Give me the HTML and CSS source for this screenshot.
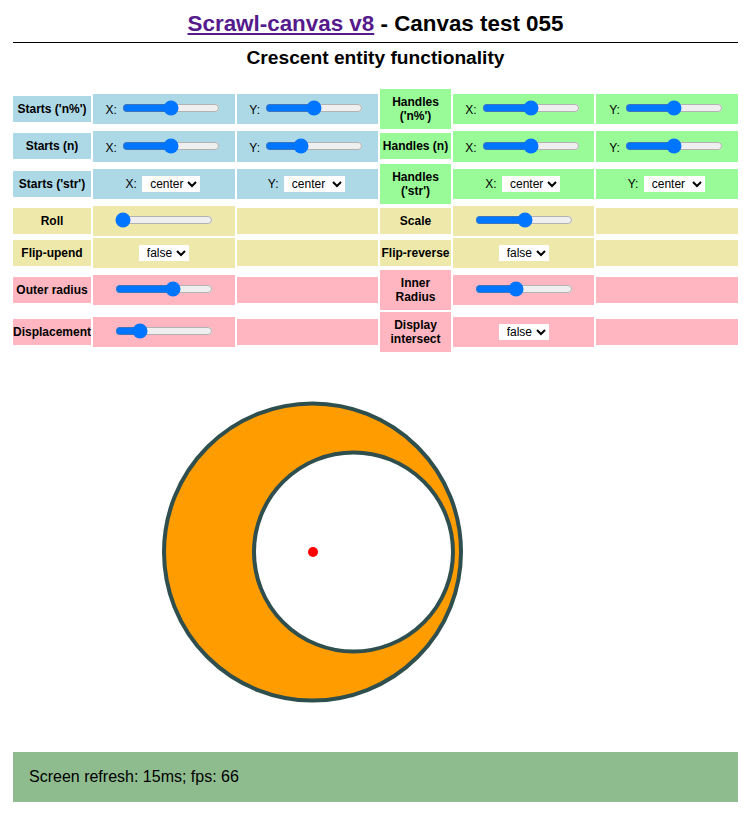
FILE: index.html
```html
<!DOCTYPE html>
<html lang="en">
<head>
<meta charset="utf-8">
<title>Demo Canvas 055</title>
<link rel="stylesheet" href="styles.css">
</head>
<body>
<h1 class="title"><a class="home" href="#">Scrawl-canvas v8</a> - Canvas test 055</h1>
<h2 class="subtitle">Crescent entity functionality</h2>

<div class="controls">
  <div class="cell label blue">Starts ('n%')</div>
  <div class="cell rng blue">X: <input class="slider" type="range" min="0" max="100" value="50"></div>
  <div class="cell rng blue">Y: <input class="slider" type="range" min="0" max="100" value="50"></div>
  <div class="cell label green">Handles ('n%')</div>
  <div class="cell rng green">X: <input class="slider" type="range" min="0" max="100" value="50"></div>
  <div class="cell rng green">Y: <input class="slider" type="range" min="0" max="100" value="50"></div>

  <div class="cell label blue">Starts (n)</div>
  <div class="cell rng blue">X: <input class="slider" type="range" min="0" max="600" value="300"></div>
  <div class="cell rng blue">Y: <input class="slider" type="range" min="0" max="600" value="200"></div>
  <div class="cell label green">Handles (n)</div>
  <div class="cell rng green">X: <input class="slider" type="range" min="-200" max="200" value="0"></div>
  <div class="cell rng green">Y: <input class="slider" type="range" min="-200" max="200" value="0"></div>

  <div class="cell label blue">Starts ('str')</div>
  <div class="cell sel blue">X: <select class="choice"><option>left</option><option selected>center</option><option>right</option></select></div>
  <div class="cell sel blue">Y: <select class="choice"><option>top</option><option selected>center</option><option>bottom</option></select></div>
  <div class="cell label green">Handles ('str')</div>
  <div class="cell sel green">X: <select class="choice"><option>left</option><option selected>center</option><option>right</option></select></div>
  <div class="cell sel green">Y: <select class="choice"><option>top</option><option selected>center</option><option>bottom</option></select></div>

  <div class="cell label yellow">Roll</div>
  <div class="cell rng yellow"><input class="slider" type="range" min="0" max="360" value="0"></div>
  <div class="cell yellow">&nbsp;</div>
  <div class="cell label yellow">Scale</div>
  <div class="cell rng yellow"><input class="slider" type="range" min="0" max="100" value="52"></div>
  <div class="cell yellow">&nbsp;</div>

  <div class="cell label yellow">Flip-upend</div>
  <div class="cell sel yellow"><select class="choice"><option selected>false</option><option>true</option></select></div>
  <div class="cell yellow">&nbsp;</div>
  <div class="cell label yellow">Flip-reverse</div>
  <div class="cell sel yellow"><select class="choice"><option selected>false</option><option>true</option></select></div>
  <div class="cell yellow">&nbsp;</div>

  <div class="cell label pink">Outer radius</div>
  <div class="cell rng pink"><input class="slider" type="range" min="0" max="100" value="61"></div>
  <div class="cell pink">&nbsp;</div>
  <div class="cell label pink">Inner Radius</div>
  <div class="cell rng pink"><input class="slider" type="range" min="0" max="100" value="41"></div>
  <div class="cell pink">&nbsp;</div>

  <div class="cell label pink">Displacement</div>
  <div class="cell rng pink"><input class="slider" type="range" min="0" max="100" value="21"></div>
  <div class="cell pink">&nbsp;</div>
  <div class="cell label pink">Display intersect</div>
  <div class="cell sel pink"><select class="choice"><option selected>false</option><option>true</option></select></div>
  <div class="cell pink">&nbsp;</div>
</div>

<svg class="stage" width="600" height="400" viewBox="0 0 600 400">
  <circle cx="299.5" cy="200" r="148.5" fill="#ff9c00" stroke="#2f4f4f" stroke-width="4"/>
  <circle cx="340.5" cy="200" r="99.5" fill="#ffffff" stroke="#2f4f4f" stroke-width="4"/>
  <circle cx="300" cy="200" r="5" fill="#ff0000"/>
</svg>

<div class="report">Screen refresh: 15ms; fps: 66</div>
</body>
</html>
```

FILE: styles.css
```css
html {
  background: #ffffff;
}

body {
  margin: 0;
  padding: 0 13px;
  font-family: "Liberation Sans", Arial, Helvetica, sans-serif;
  color: #000000;
  background: #ffffff;
}

.title {
  margin: 11px 0 0;
  padding-bottom: 5px;
  border-bottom: 1px solid #000000;
  font-size: 22.4px;
  line-height: normal;
  text-align: center;
}

.home {
  color: #551a8b;
}

.subtitle {
  margin: 4px 0 20px;
  font-size: 19.2px;
  line-height: normal;
  text-align: center;
}

.controls {
  display: grid;
  grid-template-columns: 1fr 2fr 2fr 1fr 2fr 2fr;
  gap: 2px;
  font-size: 12px;
  align-items: center;
}

.cell {
  text-align: center;
  padding: 6px 0;
}

.cell.rng {
  padding: 6.5px 0 7px;
}

.cell.sel {
  padding: 7px 0 7px;
}

.label {
  font-weight: bold;
}

.blue {
  background: #add8e6;
}

.green {
  background: #98fb98;
}

.yellow {
  background: #eee8aa;
}

.pink {
  background: #ffb6c1;
}

.slider {
  width: 98px;
  height: 16px;
  margin: 0 2px;
  vertical-align: -2px;
}

.choice {
  font: 12px "Liberation Sans", Arial, Helvetica, sans-serif;
  color: #000000;
  background: #ffffff;
  border: 0;
  border-radius: 0;
  height: 16px;
  padding: 0 0 0 4px;
  margin: 0 2px;
}

.stage {
  display: block;
}

.report {
  padding: 16px;
  background: #8fbc8f;
  font-size: 16px;
  line-height: normal;
}
```
